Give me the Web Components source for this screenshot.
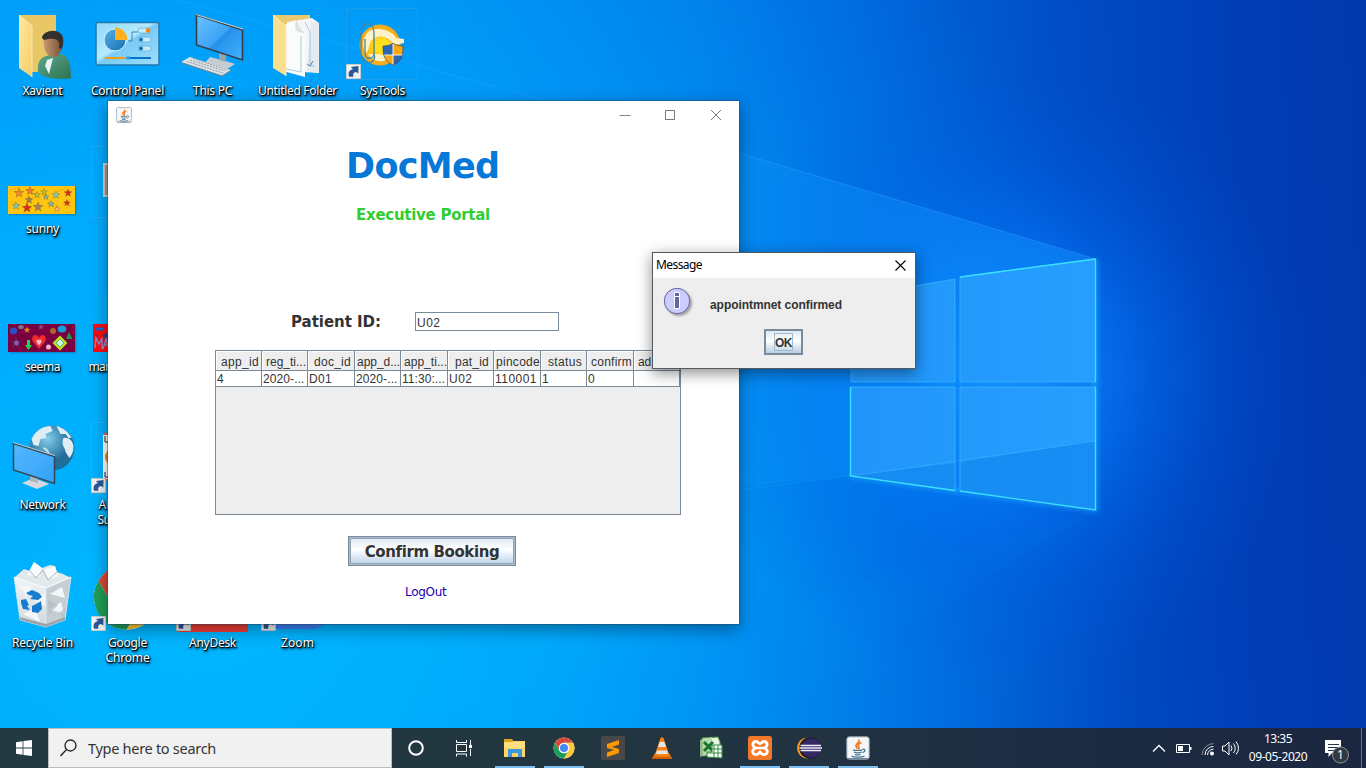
<!DOCTYPE html>
<html lang="en">
<head>
<meta charset="utf-8">
<title>Desktop</title>
<style>
html,body{margin:0;height:100%;overflow:hidden}
body{width:1366px;height:768px;font-family:"Noto Sans","Open Sans",sans-serif;font-size:12px}
</style>
</head>
<body>
<desk-top></desk-top>
<script>
const sheet = (el, css, html) => {
  const root = el.attachShadow({mode: 'open'});
  const t = document.createElement('template');
  t.innerHTML = `<style>${css}</style>${html}`;
  root.append(t.content.cloneNode(true));
  return root;
};
const star = (x, y, r, c) => {
  let p = '';
  for (let i = 0; i < 10; i++) {
    const a = -Math.PI / 2 + i * Math.PI / 5, k = i % 2 ? r * .42 : r;
    p += (x + k * Math.cos(a)).toFixed(1) + ',' + (y + k * Math.sin(a)).toFixed(1) + ' ';
  }
  return `<polygon points="${p}" fill="${c}" stroke="#6b4a22" stroke-opacity=".55" stroke-width=".6"/>`;
};
const CHROME = `<circle cx="24" cy="24" r="23" fill="#fff"/>
 <path d="M4.1 12.5A23 23 0 0 1 43.9 12.5H24A11.5 11.5 0 0 0 14 18.3L14 29.700Z" fill="#d64a3c"/>
 <path d="M4.1 12.5A23 23 0 0 0 24 47L34 29.8A11.5 11.5 0 0 1 14 29.8Z" fill="#1f9d58"/>
 <path d="M43.900 12.500A23 23 0 0 1 24 47L34 29.800A11.500 11.500 0 0 0 24 12.500Z" fill="#fcc934"/>
 <circle cx="24" cy="24" r="11" fill="#fff"/><circle cx="24" cy="24" r="8.800" fill="#4587f3"/>`;
const JAVA = `<rect x=".8" y=".8" width="22.400" height="22.400" rx="2.500" fill="#f4f6f8" stroke="#8fa1b2"/><path d="M2 22.500H22" stroke="#6f8397"/>
 <path d="M12.500 3.500C15 6 9.500 7.500 10 10c.2 1.200 1.300 1.800 1.700 2.700M15.500 6.500c-3.500 1.800-4 2.800-2.800 4.200.8 1 .4 1.600-.5 2.300" fill="none" stroke="#ee7a22" stroke-width="1.700"/>
 <path d="M7 13.800c2 .8 7.500.8 9.500 0M8 16.200c2 .7 5.500.7 7.500 0M9 18.400c1.500.6 4 .6 5.500 0M5.500 20.300c2 1.200 10.500 1.200 13-.2M16.500 13.200c3.300-.6 3.300 2.500 0 3.500" fill="none" stroke="#4b7794" stroke-width="1.300"/>`;
const ART = {
  user: ['0 0 72 72', `<defs><linearGradient id="f" x2="1" y2="1"><stop stop-color="#ffe9a0"/><stop offset="1" stop-color="#f3cd6a"/></linearGradient><linearGradient id="g" x2="1" y2="1"><stop stop-color="#5da98a"/><stop offset="1" stop-color="#2d7152"/></linearGradient><linearGradient id="s"><stop stop-color="#c9996c"/><stop offset="1" stop-color="#71503a"/></linearGradient></defs>
   <path d="M13 7H50V64H24Z" fill="#eac766"/><path d="M13 7 26 18V69L13 60Z" fill="url(#f)"/><path d="M13 7 26 18V69" fill="none" stroke="#fff0bc" stroke-width=".8"/>
   <path d="M32 64c-1-12 3-15 12-17l12-1c7 3 9 11 9 24-10 2-27 1-33-6Z" fill="url(#g)"/><path d="M41 52 47 50 43 66 39 58Z" fill="#e8f3f6"/>
   <path d="M38 30c2-7 15-9 18-1 2 9-2 21-9 20-6 0-11-10-9-19Z" fill="url(#s)"/><path d="M36 30c0-6 12-10 18-5 4 3 4 9 2 16l-3-1c2-9-4-11-15-8Z" fill="#33302e"/>`],
  panel: ['0 0 72 72', `<defs><linearGradient id="p" x2="1" y2="1"><stop stop-color="#8fd8fa"/><stop offset=".45" stop-color="#b6eafd"/><stop offset=".5" stop-color="#78cbf7"/><stop offset="1" stop-color="#a0defc"/></linearGradient><linearGradient id="q" x2="1" y2="1"><stop stop-color="#55b1e8"/><stop offset="1" stop-color="#176eb0"/></linearGradient></defs>
   <rect x="5" y="14.500" width="63" height="42.500" rx="1.500" fill="url(#p)" stroke="#1f78ac" stroke-width="1.500"/>
   <circle cx="24" cy="32" r="11" fill="url(#q)" stroke="#d8f4fd"/><path d="M24 32V19.500A12.500 12.500 0 0 1 36.500 32Z" fill="#ffb01f"/>
   <path d="M37 33h4v-9h6" fill="none" stroke="#3688b8"/><g fill="#c4ecfb" stroke="#5cabd2" stroke-width=".7"><rect x="47" y="20" width="13" height="5" rx="2.500"/><rect x="47" y="29" width="13" height="5" rx="2.500"/><rect x="47" y="38" width="13" height="5" rx="2.500"/></g>
   <circle cx="57" cy="22.500" r="2.200" fill="#ff8100"/><circle cx="50" cy="31.500" r="2" fill="#1271b5"/><circle cx="50" cy="40.500" r="2" fill="#1271b5"/>
   <path d="M14 50H35" stroke="#f59b13" stroke-width="2"/><path d="M37 50H60" stroke="#0873c9" stroke-width="2"/><circle cx="37" cy="50" r="2" fill="#2da3f3"/>`],
  pc: ['0 0 72 72', `<defs><linearGradient id="m" x2="1" y2="1"><stop stop-color="#6cc2ff"/><stop offset=".5" stop-color="#3ba3f6"/><stop offset=".52" stop-color="#2490ea"/><stop offset="1" stop-color="#45b1ff"/></linearGradient></defs>
   <path d="M34 49 50 53 59 56 48 63 27 57Z" fill="#c5ccd1"/><path d="M43 44h7v10l-7-2Z" fill="#98a4ab"/><path d="M20.500 7 66.500 22V52L20.500 37Z" fill="url(#m)" stroke="#344049" stroke-width="1.600"/><path d="M20 6 67 20.500V21.500L20 7Z" fill="#c9d1d6"/>
   <path d="M14 49 55 62 46 67.500 5 54Z" fill="#dfe3e6"/><path d="M5 54.500 46 68 55 62.500" stroke="#788891" fill="none"/><g stroke="#8b9aa3" stroke-width="1" stroke-dasharray="2 1"><path d="M14 52 49 63M11 53.500 47 65M17 50.500 52 62"/></g>`],
  folder: ['0 0 72 72', `<path d="M12 7H49V60H25Z" fill="#ebc96f"/><path d="M26 14 51 10 58 15V65L26 63Z" fill="#f3f5f7"/><path d="M50 14 57.500 15V65L46 63Z" fill="#e4eaee"/><path d="M44 14 49 24V58H54" fill="none" stroke="#9abbe0" stroke-width=".8"/><path d="M46 56l3 2 3-5" fill="none" stroke="#4a7fc4"/><path d="M22 18 35 12 44 25V69L22 63Z" fill="#fafbfb"/><path d="M35 12V22L43 25" fill="#e1e5e8" stroke="#c2c9ce" stroke-width=".6"/><path d="M25 61 40 64V28" fill="none" stroke="#88c6d5" stroke-width=".8"/><path d="M12 7 25 18V68L12 60Z" fill="#fbdf91"/><path d="M12 7 25 18V68" fill="none" stroke="#fff0be"/>`],
  systools: ['0 0 72 72', `<rect x=".5" y=".5" width="71" height="71" fill="none" stroke="#2c9ce9" stroke-opacity=".65"/><defs><radialGradient id="o"><stop stop-color="#ffec28"/><stop offset=".45" stop-color="#ffcb1d"/><stop offset="1" stop-color="#f2a71e"/></radialGradient></defs><circle cx="34" cy="37" r="20.500" fill="url(#o)"/><path d="M22 24C32 17 48 24 50 30L58 31V35L48 37C44 30 36 26 28 30 22 34 24 42 20 45 16 40 16 31 22 24Z" fill="#fff1c8"/><path d="M22 46C28 55 38 55 44 49L38 46Z" fill="#fff1c8"/><circle cx="37" cy="39" r="8" fill="#ffe01c"/>
   <path d="M19 31V45c0 7 9 7 9 0V24c0-11-13-11-13 0v22c0 13 17 10 13 0" fill="none" stroke="#45879f" stroke-width="1.300"/>
   <path d="M37 38c5 0 8-1 10-3 2 2 6 3 10 3 0 9-1 15-10 19-9-4-10-10-10-19Z" fill="#faa711"/><path d="M47 35V47H37.300C37 44 37 41 37 38c5 0 8-1 10-3ZM47 47H56.600C56 51 53 55 47 57Z" fill="#2c69b2"/><path d="M47 35V57M37 47H57" stroke="#fff" stroke-width=".9"/><path d="M37 38c5 0 8-1 10-3 2 2 6 3 10 3 0 9-1 15-10 19-9-4-10-10-10-19Z" fill="none" stroke="#3a4c5e" stroke-width=".7"/>`],
  sunny: ['0 -1 72 72', `<rect x="3.500" y="40.500" width="67" height="28" fill="#0571ae" opacity=".5"/><rect x="2" y="39" width="67" height="28" fill="#fec511"/>
   <path d="M5 43l8-3M24 45l7 2M43 57l10 2M52 44l8-3M5 54l8 4M60 61l7-3" stroke="#c79418" stroke-width=".7" stroke-dasharray="2 1.500"/>`
   + star(13,46,5,'#f08530') + star(24,44,4.500,'#ee7835') + star(31,48,3.500,'#b7c533') + star(38,45,3.500,'#b7c533') + star(40,50,3,'#70bcc4') + star(50,48,4,'#80c9c6') + star(62,46,4,'#dd2a1d') + star(23,53,4,'#a27d50') + star(10,59,4,'#78cace') + star(21,61,5,'#dd2a1d') + star(32,60,5,'#a9835c') + star(45,57,3.500,'#73b9bc') + star(61,56,3.500,'#dd2a1d') + star(51,62,3,'#ffc887')],
  seema: ['0 -1 72 72', `<rect x="3.500" y="40.500" width="67" height="28" fill="#0571ae" opacity=".5"/><rect x="2" y="39" width="67" height="28" fill="#7a0042"/>
   <circle cx="7.500" cy="46" r="3.600" fill="#304fbf"/><ellipse cx="15" cy="42" rx="2.800" ry="2" fill="#7c7480"/>`
   + star(21,45,3.500,'#f78426') + star(35,42,3,'#8b40a9') + star(10,58,6,'#422064') + `<circle cx="10.500" cy="58" r="2.400" fill="#9657b2"/><circle cx="47" cy="46" r="3" fill="#a96634"/><ellipse cx="56" cy="44" rx="4.300" ry="3.500" fill="#149eda"/><path d="M63 47 66.500 54H60Z" fill="#1d9c43"/>
   <path d="M33 64 26.500 56c-2-7 5-8 6.500-3 1.500-5 8-4 6.500 3Z" fill="#f12b2b"/><path d="M33 60.500 30.500 57c0-3 2-3 2.500-1 .5-2 2.500-2 2.500 1Z" fill="#fbbfd0"/>
   <path d="M21 55h3v5h2l-3.500 5L19 60h2Z" fill="#21d84c"/><circle cx="42.500" cy="62" r="2.500" fill="#f2b1cb"/><path d="M54 50.500 61.500 58 54 65.500 46.500 58Z" fill="#b5e51d"/><path d="M54 54 58 58 54 62 50 58Z" fill="#c6eff0" stroke="#4b9656" stroke-width=".7"/>`],
  mar: ['0 -1 72 72', `<rect x="2" y="39" width="67" height="28" fill="#fa0d12"/><ellipse cx="9" cy="44" rx="4.500" ry="1.700" fill="#1464d0"/><path d="M3 49c2-2 3 2 5 1l-2 3Z" fill="#b81427"/>${star(15,51,4,'#2631a0')}<path d="M4 63 5 53 8 59 11 53 11 64M12 64 15 54 18 64M13 60H17" fill="none" stroke="#8c88cc" stroke-width="1.500"/>`],
  edge: ['0 0 72 72', `<rect x=".5" y=".5" width="71" height="71" fill="none" stroke="#35a9ef" stroke-opacity=".7"/><rect x="12" y="17" width="40" height="34" fill="#d6cfc8"/><rect x="14" y="19" width="40" height="30" fill="#a3978e"/>`],
  network: ['0 0 72 72', `<defs><radialGradient id="w" cx=".4" cy=".3"><stop stop-color="#85cdea"/><stop offset="1" stop-color="#216e9a"/></radialGradient><linearGradient id="m" x2="1" y2="1"><stop stop-color="#55b7ff"/><stop offset="1" stop-color="#32a1f7"/></linearGradient></defs>
   <g transform="translate(.5 -8)"><circle cx="45.500" cy="34" r="22.500" fill="url(#w)"/><path d="M25 25c5-10 13-13 19-13l2 5-7 3 1 4-6 1-2 7-5-1ZM50 12c7 2 12 6 15 12l-3 0-3-4-5 0-2-4ZM57 24c5-1 9 2 10 8 0 7-2 9-4 12l-4-6c0-4-5-7-2-14Z" fill="#dcedf3"/><path d="M37 34c5 2 7 8 4 12" stroke="#c6dfeb" stroke-width="2" fill="none"/></g>
   <path d="M16 61 28 56 43 62 31 67Z" fill="#d4dadc"/><path d="M24 50h8v11l-8-2Z" fill="#aab6bc"/><path d="M7.500 21.500 48.500 34.500V61.500L7.500 48Z" fill="url(#m)" stroke="#334957" stroke-width="1.500"/><path d="M7 20.500 49 33.500" stroke="#bacbd3"/>`],
  ali: ['0 0 72 72', `<rect x=".5" y=".5" width="71" height="71" fill="none" stroke="#35b5f4" stroke-opacity=".6"/><rect x="12" y="11" width="40" height="48" fill="#fff"/><path d="M14 14v6h4M14 50v5h4" fill="none" stroke="#222"/><circle cx="23" cy="35" r="9" fill="#ef8425"/><path d="M12 12h6M12 58h6" stroke="#d1323d" stroke-width="1.500"/>`],
  bin: ['0 0 72 72', `<defs><linearGradient id="l" x2="0" y2="1"><stop stop-color="#eef3f6"/><stop offset="1" stop-color="#d3dadf"/></linearGradient></defs><path d="M8 18 18 9 24 11 28 2 36 8 44 5 49 6 51 12 57 14 65 18 40 29Z" fill="#e3e8eb"/><path d="M28 2 36 8 33 17 21 15ZM37 10 49 6 52 16 42 20Z" fill="#f8fafb"/><path d="M24 11 30 18 37 10 42 20 51 12" fill="none" stroke="#aab4ba" stroke-width="1"/>
   <path d="M8 17 40 28 65 17 59 60 40 67 14 60Z" fill="url(#l)"/><path d="M40 28 65 17 59 60 40 67Z" fill="#c5ced3"/>
   <path d="M12 24 27 28 20 36ZM28 40 40 32 39 46ZM17 54 29 49 34 62ZM44 34 56 27 59 38ZM43 50 55 42 58 53Z" fill="#f4f7f8"/><path d="M42 40 52 45 43 55ZM54 52 60 47 57 60Z" fill="#aeb9c0" opacity=".6"/>
   <path d="M8 17 40 28 65 17" fill="none" stroke="#f1fafd" stroke-width="1.300"/><path d="M8 17 14 60 40 67 59 60 65 17M40 28V67" fill="none" stroke="#cfe9f4" stroke-width=".8"/><path d="M14 57 40 64 59 57V60L40 67 14 60Z" fill="#9da5aa"/>
   <path d="M20 33l6-3 7 3 3 4-4 3-8-1 3-3-4-1ZM15 40l5-1 3 6-2 1 3 4-7-1-2-6ZM26 46l6-3 3-2 1 8-4 4-6-1Z" fill="#177bd0"/>`],
  chrome: ['-2 0 72 72', `<g transform="translate(-.5 3) scale(1.420)">${CHROME}</g>`],
  any: ['0 0 72 72', `<path d="M2 0H72V72H2Z" fill="#ef3e36"/>`],
  zoom: ['0 0 72 72', `<rect x="3" y="2" width="66" height="67" rx="18" fill="#3d7ff5"/>`]
};

customElements.define('wall-paper', class extends HTMLElement {
  constructor() {
    super();
    sheet(this, `:host{display:block;width:1366px;height:768px}svg{display:block}`, `
<svg width="1366" height="768" viewBox="0 0 1366 768"><defs>
<linearGradient id="base" gradientUnits="userSpaceOnUse" x1="0" y1="60" x2="1366" y2="0"><stop stop-color="#00a0f6"/><stop offset=".3" stop-color="#0095f1"/><stop offset=".5" stop-color="#007fe9"/><stop offset=".64" stop-color="#0066da"/><stop offset=".78" stop-color="#004dc6"/><stop offset=".9" stop-color="#003eb6"/><stop offset="1" stop-color="#0238ad"/></linearGradient>
<radialGradient id="glow" gradientUnits="userSpaceOnUse" cx="1000" cy="375" r="310"><stop stop-color="#1290ff" stop-opacity=".9"/><stop offset=".4" stop-color="#0578fa" stop-opacity=".6"/><stop offset=".7" stop-color="#0062ea" stop-opacity=".25"/><stop offset="1" stop-color="#0058e0" stop-opacity="0"/></radialGradient>
<radialGradient id="low" gradientUnits="userSpaceOnUse" cx="200" cy="560" r="950"><stop stop-color="#00b8ff"/><stop offset=".4" stop-color="#00b0ff" stop-opacity=".75"/><stop offset=".7" stop-color="#0098fa" stop-opacity=".4"/><stop offset="1" stop-color="#007df0" stop-opacity="0"/></radialGradient>
<linearGradient id="beam" gradientUnits="userSpaceOnUse" x1="1090" y1="380" x2="300" y2="300"><stop stop-color="#1495ff" stop-opacity=".45"/><stop offset="1" stop-color="#0099fc" stop-opacity=".06"/></linearGradient>
<linearGradient id="pane" x1="0" x2="1"><stop stop-color="#2295fa"/><stop offset="1" stop-color="#259fff"/></linearGradient>
<filter id="soft"><feGaussianBlur stdDeviation="2.500"/></filter></defs>
<rect width="1366" height="768" fill="url(#base)"/><rect width="1366" height="768" fill="url(#low)"/><rect width="1366" height="768" fill="url(#glow)"/>
<path d="M1096 259 739 153 177 0H0V560L850 476 1096 510Z" fill="url(#beam)"/>
<path d="M1096 259 739 153 177 0" fill="none" stroke="#31a5ff" stroke-opacity=".4"/>
<path d="M850 476 740 490" fill="none" stroke="#27bcff" stroke-opacity=".25"/>
<path d="M1096 510 740 620 400 728H740L1096 510Z" fill="#00a0ff" opacity=".06"/>
<g filter="url(#soft)" fill="none" stroke="#25b8ff" stroke-width="4" opacity=".6"><path d="M1096 259V510L850 476"/></g>
<path d="M851 297 955 279V382H851ZM960 277 1096 259V382H960ZM851 387H955V491L851 476ZM960 387H1096V510L960 491Z" fill="url(#pane)"/>
<path d="M851 476 955 463V491ZM960 462 1096 441V510L960 491Z" fill="#1087ee" opacity=".7"/><path d="M851 476 1096 441" stroke="#36bbff" opacity=".45"/>
<path d="M851 297V382H955V279ZM960 382V277L1096 259M851 387H955V491M960 491V387H1096M960 382H1096" fill="none" stroke="#37b4ff" stroke-opacity=".8"/>
<path d="M1095.500 259V382M1095.500 387V510L960 491M955 490.500 850.500 476V387M960 277 1095.500 259" fill="none" stroke="#3ce0ff" stroke-width="1.400"/></svg>`);
  }
});

customElements.define('desk-icon', class extends HTMLElement {
  constructor() {
    super();
    const [box, art] = ART[this.getAttribute('art')];
    const link = this.hasAttribute('link') ? `<svg class="link" viewBox="0 0 15 15"><path d="M0 0H15V15H0Z" fill="#f2f2f2" stroke="#9aa"/><path d="M3 12.800c-1.200-4.300.5-7 4-7.500L5 3l7.500-1L12.300 9.500 10 8C7.500 8.500 6.500 10 7.500 12.800Z" fill="#2b579b"/></svg>` : '';
    sheet(this, `:host{display:flex;flex-direction:column;align-items:center;width:85px;height:138px;box-sizing:border-box;padding-top:8px;color:#fff;text-align:center}
.pic{position:relative;width:72px;height:72px;margin:0 1px 3px 0}.pic>svg:first-child{display:block;width:72px;height:72px}
.link{position:absolute;left:0;bottom:1px;width:15px;height:15px}
.label{line-height:15px;font-size:12px;white-space:nowrap;text-shadow:1px 1px 1px #000,0 1px 2px #000,1px 2px 3px rgba(0,0,0,.85)}`,
    `<div class="pic"><svg viewBox="${box}">${art}</svg>${link}</div><div class="label"><slot></slot></div>`);
  }
});

customElements.define('app-window', class extends HTMLElement {
  constructor() {
    super();
    sheet(this, `:host{display:flex;flex-direction:column;width:631px;height:523px;background:#fff;box-shadow:0 0 0 1px rgba(40,70,100,.45),0 5px 16px rgba(0,0,0,.4);color:#333;font-family:"Liberation Sans",sans-serif}
header{display:flex;height:28px;align-items:center;justify-content:space-between;padding-left:8px}
.ctl{display:flex}.ctl svg{width:46px;height:28px}.ctl svg:last-child{width:45px}
main{display:flex;flex-direction:column;padding-left:107px;width:466px}
h1{margin:18px 0 0;padding-left:131px;font:bold 35px/38px "DejaVu Sans",Verdana,sans-serif;color:#0878d8}
h2{margin:20px 0 0;padding-left:141px;font:bold 15px/20px "DejaVu Sans",Verdana,sans-serif;color:#32cd32}
.field{display:flex;align-items:center;height:20px;margin-top:86px;padding-left:76px}
label{width:124px;font:bold 15px/20px "DejaVu Sans",Verdana,sans-serif;position:relative;top:1px}
.input{box-sizing:border-box;width:144px;height:19px;border:1px solid #7a8a99;font-size:12px;line-height:20px;padding-left:1px}
app-table{margin-top:19px}
button{align-self:flex-start;margin:21px 0 0 133px;width:168px;height:30px;border:1px solid #7a8a99;padding:0;box-shadow:inset 0 0 0 1px #a9bccd,inset 0 0 0 2px #8fa3b6;background:linear-gradient(#dde8f3,#fff 45%,#b8cfe5);font:bold 15px/28px "DejaVu Sans",Verdana,sans-serif;color:#333}
button fit-text{padding-top:1px}
a{align-self:flex-start;margin:18px 0 0 190px;font:12px/16px "DejaVu Sans",Verdana,sans-serif;color:#1800b4}`,
`<header><svg width="16" height="16" viewBox="0 0 24 24">${JAVA}</svg><div class="ctl">
<svg viewBox="0 0 46 28"><path d="M17.500 14.500h11" stroke="#888"/></svg><svg viewBox="0 0 46 28"><path d="M17.500 9.500h9v9h-9z" fill="none" stroke="#777"/></svg><svg viewBox="0 0 45 28"><path d="M17 9 27 19M27 9 17 19" stroke="#777"/></svg></div></header>
<main><h1><fit-text w="153.500">DocMed</fit-text></h1><h2><fit-text w="134">Executive Portal</fit-text></h2>
<div class="field"><label><fit-text w="90">Patient ID:</fit-text></label><div class="input"><fit-text w="23.500">U02</fit-text></div></div>
<app-table></app-table><button><fit-text w="134">Confirm Booking</fit-text></button><a><fit-text w="41.500">LogOut</fit-text></a></main>`);
  }
});

customElements.define('app-table', class extends HTMLElement {
  constructor() {
    super();
    const heads = [['app_id',38],['reg_ti...',40],['doc_id',37],['app_d...',43],['app_ti...',43],['pat_id',34],['pincode',44],['status',34],['confirm',41],['ad',13]];
    const cells = [['4',7],['2020-...',41.500],['D01',23],['2020-...',41.500],['11:30:...',43],['U02',23.500],['110001',42],['1',7],['0',7],['',0]];
    const ft = ([t, w]) => t ? `<fit-text w="${w}">${t}</fit-text>` : '';
    sheet(this, `:host{display:block;box-sizing:border-box;width:466px;height:165px;border:1px solid #7a8a99;background:#eee;font-size:12px;color:#333}
.row{display:grid;grid-template-columns:46px 46px 47px 46px 47px 46px 47px 46px 47px 46px}
.row>div{box-sizing:border-box;border-right:1px solid #7a8a99;border-bottom:1px solid #7a8a99;white-space:nowrap;overflow:hidden}
.h>div{height:20px;line-height:22px;text-align:center;padding-left:3px;box-shadow:inset 1px 1px #fff}.h>div:nth-child(4),.h>div:nth-child(7){padding-left:2px}.h>div:last-child{text-align:left;padding-left:4px}
.b>div{height:16px;line-height:16px;background:#fff;padding-left:1px}`,
`<div class="row h">${heads.map(h => `<div>${ft(h)}</div>`).join('')}</div><div class="row b">${cells.map(c => `<div>${ft(c)}</div>`).join('')}</div>`);
  }
});

customElements.define('message-box', class extends HTMLElement {
  constructor() {
    super();
    sheet(this, `:host{display:flex;flex-direction:column;box-sizing:border-box;width:264px;height:117px;border:1px solid #55595d;background:#eee;box-shadow:0 4px 14px rgba(0,0,0,.45);font:bold 12px "Liberation Sans",sans-serif;color:#333}
header{display:flex;justify-content:space-between;align-items:center;height:25px;background:#fff;padding:0 9px 0 3px;font:12px/15px "Noto Sans",sans-serif;color:#000}
header fit-text{margin-top:-2px}header svg{margin-top:-1px}
.msg{display:flex;align-items:center;height:32px;margin-top:9px;padding-left:10px;gap:14px}.msg fit-text{margin-top:3px}
button{align-self:center;width:39px;height:26px;margin:10px 1px 0 0;border:2px solid #7a8a99;padding:0;background:linear-gradient(#dde8f3,#fff 45%,#b8cfe5);display:flex;align-items:center;justify-content:center;font:bold 12px "Liberation Sans",sans-serif;color:#333}
button span{border:1px solid #a3b8cc;line-height:18px;height:16px;width:17px}`,
`<header><fit-text w="46">Message</fit-text><svg width="11" height="11"><path d="M.5.500 10.500 10.500M10.500.500.500 10.500" stroke="#000" stroke-width="1.100"/></svg></header>
<div class="msg"><svg width="33" height="32"><defs><filter id="b"><feGaussianBlur stdDeviation="1.200"/></filter></defs><circle cx="16" cy="16" r="13" fill="#777" opacity=".65" filter="url(#b)"/><circle cx="14" cy="14" r="12.700" fill="#ccf" stroke="#669"/><path d="M11.500 5.500h5v4h-5zM11.500 9.500h5v12h-5z" fill="#669" stroke="#fff"/></svg><fit-text w="132">appointmnet confirmed</fit-text></div>
<button><span><fit-text w="17">OK</fit-text></span></button>`);
  }
});

customElements.define('task-app', class extends HTMLElement {
  constructor() {
    super();
    const art = {
      files: `<path d="M0 3V20H21V4H9L8 2H1Z" fill="#f9d567"/><path d="M0 2H8L9 5H0Z" fill="#dca21c"/><path d="M4 12H18V20H14V16H8V20H4Z" fill="#3a98df"/><path d="M0 5H21V11H0Z" fill="#ffe18a" opacity=".7"/>`,
      chrome: `<g transform="translate(0 0) scale(.458)">${CHROME}</g>`,
      sublime: `<rect x="-1" y="-1" width="24" height="24" rx="1.500" fill="#484848"/><path d="M17 3V7.500L10 10 17 12V16L5 20V15.500L12 13 5 11V7Z" fill="#ff9800"/>`,
      vlc: `<path d="M4 16H18L21 21.500H1Z" fill="#ed7a0c"/><path d="M11 0 9.500 1 4 17c2 3 12 3 14 0L12.500 1Z" fill="#f68418"/><path d="M8.700 5H13.300L15 10H7ZM6 13.500H16L17 17H5Z" fill="#e6e6e6"/><path d="M1 20H21V22H1Z" fill="#c96007"/>`,
      excel: `<path d="M2 1 18 0 20 5V17L3 19Z" fill="#e7f3e3" stroke="#529147"/><path d="M0 3 12 0V16L0 20Z" fill="#acd59d" opacity=".8"/><path d="M4 5l9 9M13 5l-9 9" stroke="#197529" stroke-width="3"/><path d="M12 8H22V21L7 20V15H12Z" fill="#f8fff5" stroke="#388945"/><path d="M12 12H22M7 16H22M14 8V20M18 8V21" stroke="#388945"/>`,
      xampp: `<rect x="-1" y="-1" width="24" height="24" rx="2.500" fill="#f27829"/><path d="M7 4.500C4 4.500 3 8 5 10l2 1-2 1C2 15 5 19 9 17l2-2 2 2c4 2 7-2 4-5l-2-1 2-1c2-2 1-5.500-2-5.500-2 0-2 2-4 2s-2-2-4-2Z" fill="none" stroke="#fff" stroke-width="2.800"/><path d="M8 11H14" stroke="#fff" stroke-width="2.500"/>`,
      eclipse: `<circle cx="9.500" cy="11" r="10.500" fill="#f59b25"/><circle cx="12" cy="11" r="10.700" fill="#171827"/><circle cx="13" cy="11" r="9.700" fill="#352a68"/><path d="M2.500 8.500H23M1.500 11H24M2.500 13.500H23" stroke="#f0edf8" stroke-width="1.300"/>`,
      java: `<g transform="translate(-1 -1)">${JAVA}</g>`
    }[this.getAttribute('app')];
    sheet(this, `:host{display:flex;width:49px;height:40px;justify-content:center;align-items:center;position:relative}:host([open])::after{content:"";position:absolute;left:4px;right:5px;bottom:0;height:2px;background:#7cbef2}svg{overflow:visible;margin-right:1px}`, `<svg width="22" height="22" viewBox="0 0 22 22">${art}</svg>`);
  }
});

customElements.define('task-bar', class extends HTMLElement {
  constructor() {
    super();
    const app = (n, o) => `<task-app app="${n}" ${o ? 'open' : ''}></task-app>`;
    sheet(this, `:host{display:flex;box-sizing:border-box;width:1366px;height:40px;background:linear-gradient(90deg,#233a43,#22373f 35%,#213342 60%,#1c2b42 78%,#1b2740);color:#fff}
svg{display:block;flex:none}.search{display:flex;align-items:center;box-sizing:border-box;width:344px;height:40px;background:#f1f1f1;border:1px solid #bdbdbd;color:#333;font-size:14.500px}
.apps{display:flex;margin-left:3px}.tray{display:flex;flex:1;justify-content:flex-end}
.clock{width:72px;text-align:center;font-size:12px;line-height:18px;padding-top:2px;white-space:nowrap}.clock div{height:18px}.peek{width:5px;border-left:1px solid #667486;box-sizing:border-box}`,
`<svg width="48" height="40"><path d="M16 14.200 22.600 13.300V19.600H16ZM23.400 13.100 32 12V19.600H23.400ZM16 20.400H22.600V26.700L16 25.800ZM23.400 20.400H32V28L23.400 26.900Z" fill="#fff"/></svg>
<div class="search"><svg width="39" height="38"><g fill="none" stroke="#222" stroke-width="1.300"><circle cx="21.500" cy="16.500" r="5.500"/><path d="M17.500 20.500 11.500 27"/></g></svg><fit-text w="128">Type here to search</fit-text></div>
<svg width="48" height="40"><circle cx="24" cy="20" r="6.800" fill="none" stroke="#fff" stroke-width="2"/></svg>
<svg width="48" height="40"><g fill="none" stroke="#fff"><path d="M16.500 12v2.500h10V12M16.500 16.500h10v7h-10ZM16.500 28.500v-2.500h10V28.500M30.500 12v5M30.500 21v7"/><path d="M29 18.500h3" stroke-width="3"/></g></svg>
<div class="apps">${app('files',1)}${app('chrome',1)}${app('sublime')}${app('vlc')}${app('excel')}${app('xampp',1)}${app('eclipse',1)}${app('java',1)}</div>
<div class="tray"><svg width="25" height="40"><path d="M6 23.500 12 17.500 18 23.500" fill="none" stroke="#fff" stroke-width="1.300" transform="translate(3)"/></svg>
<svg width="25" height="40"><g transform="translate(3)"><path d="M4.500 16.500h13v8h-13Z" fill="none" stroke="#fff"/><path d="M6 18h5v5H6ZM18 19h1.500v3H18Z" fill="#fff"/></g></svg>
<svg width="23" height="40"><g transform="translate(4)"><g fill="none" stroke="#fff"><path d="M4 27A12 12 0 0 1 15.500 15.500" opacity=".45"/><path d="M7 27A8.500 8.500 0 0 1 15.500 18.500M9.500 27A6 6 0 0 1 15.500 21.200"/></g><circle cx="14" cy="25.500" r="2" fill="#fff"/></g></svg>
<svg width="25" height="40"><g fill="none" stroke="#fff" transform="translate(1)"><path d="M4.500 18v5h2.500l4 4V14L7 18ZM13 17.500q2 3 0 5.500M15.500 15.500q3.500 5 0 9.500M18 13.500q5 7 0 13"/></g></svg>
<div class="clock"><div><fit-text w="28">13:35</fit-text></div><div><fit-text w="58.500">09-05-2020</fit-text></div></div>
<svg width="47" height="40"><path d="M12 12H28V25H19L15.500 29V25H12Z" fill="#fff" transform="translate(-1)"/><path d="M14 16.500H25M14 19.500H25M14 22.500H21" stroke="#26364a"/><circle cx="26.500" cy="27" r="8" fill="#34393f" stroke="#8d949c"/><text x="26.500" y="31" fill="#fff" font-size="12" text-anchor="middle">1</text></svg><div class="peek"></div></div>`);
  }
});

customElements.define('desk-top', class extends HTMLElement {
  constructor() {
    super();
    const icons = [
      [1,1,'user',0,[['Xavient',40]]],[2,1,'panel',0,[['Control Panel',73]]],[3,1,'pc',0,[['This PC',39]]],[4,1,'folder',0,[['Untitled Folder',79]]],[5,1,'systools',1,[['SysTools',45]]],
      [1,2,'sunny',0,[['sunny',33]]],[2,2,'edge',0,[]],
      [1,3,'seema',0,[['seema',35]]],[2,3,'mar',0,[['mar',21]]],
      [1,4,'network',0,[['Network',46]]],[2,4,'ali',1,[['Al',11],['Su',13]]],
      [1,5,'bin',0,[['Recycle Bin',61]]],[2,5,'chrome',1,[['Google',39],['Chrome',44]]],[3,5,'any',1,[['AnyDesk',47]]],[4,5,'zoom',1,[['Zoom',33]]]
    ];
    sheet(this, `:host{display:block;position:relative;width:1366px;height:768px;overflow:hidden}
.layer{position:absolute;inset:0}.icons{display:grid;grid-template-columns:repeat(5,85px);grid-template-rows:repeat(5,138px);align-content:start}
.ali div{margin-left:-47px}.mar div{margin-left:-57px}
app-window{position:absolute;left:108px;top:101px}message-box{position:absolute;left:652px;top:252px}task-bar{position:absolute;left:0;bottom:0}`,
`<wall-paper class="layer"></wall-paper><div class="layer icons">${icons.map(([c, r, a, l, t]) =>
  `<desk-icon style="grid-area:${r}/${c}" art="${a}" ${l ? 'link' : ''} class="${a}">${t.map(([s, w]) => `<div><fit-text w="${w}">${s}</fit-text></div>`).join('')}</desk-icon>`).join('')}</div>
<app-window></app-window><message-box></message-box><task-bar></task-bar>`);
  }
});

/* Spreads its text evenly over the width given in w. */
customElements.define('fit-text', class extends HTMLElement {
  constructor() {
    super();
    sheet(this, `:host{display:inline-block;white-space:pre;letter-spacing:0}`, `<slot></slot>`);
  }
  connectedCallback() {
    const w = +this.getAttribute('w'), n = this.textContent.length;
    const now = this.getBoundingClientRect().width;
    if (w && n) {
      this.style.letterSpacing = ((w - now) / n).toFixed(3) + 'px';
    }
  }
});
</script>
</body>
</html>
